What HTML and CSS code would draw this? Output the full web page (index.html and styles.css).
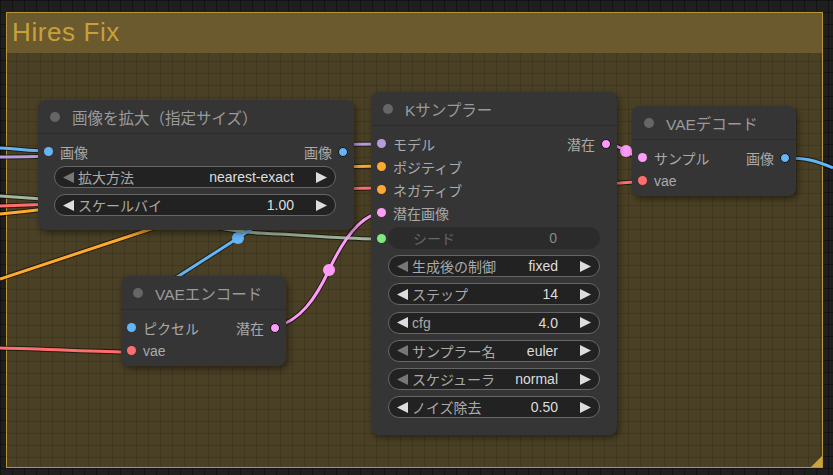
FILE: index.html
```html
<!DOCTYPE html>
<html lang="ja">
<head>
<meta charset="utf-8">
<title>Hires Fix</title>
<link rel="stylesheet" href="styles.css">
</head>
<body>
<div class="canvas">
  <div class="group">
    <div class="group-title">Hires Fix</div>
    <div class="group-body"></div>
    <div class="group-corner"></div>
  </div>

  <svg class="wires" width="833" height="475" viewBox="0 0 833 475">
    <g class="wire-shadow">
      <path d="M0,148 C20,149 30,151 47,151"/>
      <path d="M0,157 C120,157 280,144 381,144"/>
      <path d="M0,214 C150,200 250,166 381,166"/>
      <path d="M0,279 L160,226 C200,214 260,200 330,195"/>
      <path d="M0,196 C150,205 200,230 260,233 S350,239 381,239"/>
      <path d="M0,206 C200,200 300,188 380,188 L620,183 C630,182 635,182 642,182"/>
      <path d="M0,348 C50,349 100,352 131,352"/>
      <path d="M160,288 L238,238 L262,222"/>
      <path d="M276,327 C300,320 315,300 329,270 S360,215 381,213"/>
      <path d="M606,144 C615,144 620,148 625,150 S635,158 642,158"/>
      <path d="M786,158 C805,158 815,160 833,168"/>
    </g>
    <g class="wire">
      <path stroke="#64b5f6" d="M0,148 C20,149 30,151 47,151"/>
      <path stroke="#b39ddb" d="M0,157 C120,157 280,144 381,144"/>
      <path stroke="#ffa931" d="M0,214 C150,200 250,166 381,166"/>
      <path stroke="#ffa931" d="M0,279 L160,226 C200,214 260,200 330,195"/>
      <path stroke="#a1b5a1" d="M0,196 C150,205 200,230 260,233 S350,239 381,239"/>
      <path stroke="#ff6e6e" d="M0,206 C200,200 300,188 380,188 L620,183 C630,182 635,182 642,182"/>
      <path stroke="#ff6e6e" d="M0,348 C50,349 100,352 131,352"/>
      <path stroke="#64b5f6" d="M160,288 L238,238 L262,222"/>
      <path stroke="#ff9cf9" d="M276,327 C300,320 315,300 329,270 S360,215 381,213"/>
      <path stroke="#ff9cf9" d="M606,144 C615,144 620,148 625,150 S635,158 642,158"/>
      <path stroke="#64b5f6" d="M786,158 C805,158 815,160 833,168"/>
    </g>
    <circle cx="238" cy="238" r="6" fill="#64b5f6"/>
    <circle cx="329" cy="270" r="6" fill="#ff9cf9"/>
    <circle cx="626" cy="151" r="6" fill="#ff9cf9"/>
  </svg>

  <!-- Image scale node -->
  <div class="node node-scale">
    <div class="node-title"><span class="title-dot"></span>画像を拡大（指定サイズ）</div>
    <div class="node-body">
      <div class="slot-row">
        <div class="slot-in"><span class="dot c-image"></span>画像</div>
        <div class="slot-out">画像<span class="dot out c-image"></span></div>
      </div>
      <div class="widgets">
        <div class="widget">
          <svg class="arrow dim" viewBox="0 0 11 11"><polygon points="11,0 11,11 0,5.5"/></svg>
          <span class="w-label">拡大方法</span>
          <span class="w-value">nearest-exact</span>
          <svg class="arrow" viewBox="0 0 11 11"><polygon points="0,0 0,11 11,5.5"/></svg>
        </div>
        <div class="widget">
          <svg class="arrow" viewBox="0 0 11 11"><polygon points="11,0 11,11 0,5.5"/></svg>
          <span class="w-label">スケールバイ</span>
          <span class="w-value">1.00</span>
          <svg class="arrow" viewBox="0 0 11 11"><polygon points="0,0 0,11 11,5.5"/></svg>
        </div>
      </div>
    </div>
  </div>

  <!-- KSampler -->
  <div class="node node-ksampler">
    <div class="node-title"><span class="title-dot"></span>Kサンプラー</div>
    <div class="node-body">
      <div class="slot-row">
        <div class="slot-in"><span class="dot c-model"></span>モデル</div>
        <div class="slot-out">潜在<span class="dot out c-latent"></span></div>
      </div>
      <div class="slot-row">
        <div class="slot-in"><span class="dot c-cond"></span>ポジティブ</div>
      </div>
      <div class="slot-row">
        <div class="slot-in"><span class="dot c-cond"></span>ネガティブ</div>
      </div>
      <div class="slot-row">
        <div class="slot-in"><span class="dot c-latent"></span>潜在画像</div>
      </div>
      <div class="seed-row">
        <span class="dot c-int"></span>
        <div class="widget widget-off">
          <span class="w-label">シード</span>
          <span class="w-value">0</span>
        </div>
      </div>
      <div class="widgets widgets-k">
        <div class="widget">
          <svg class="arrow dim" viewBox="0 0 11 11"><polygon points="11,0 11,11 0,5.5"/></svg>
          <span class="w-label">生成後の制御</span>
          <span class="w-value">fixed</span>
          <svg class="arrow" viewBox="0 0 11 11"><polygon points="0,0 0,11 11,5.5"/></svg>
        </div>
        <div class="widget">
          <svg class="arrow" viewBox="0 0 11 11"><polygon points="11,0 11,11 0,5.5"/></svg>
          <span class="w-label">ステップ</span>
          <span class="w-value">14</span>
          <svg class="arrow" viewBox="0 0 11 11"><polygon points="0,0 0,11 11,5.5"/></svg>
        </div>
        <div class="widget">
          <svg class="arrow" viewBox="0 0 11 11"><polygon points="11,0 11,11 0,5.5"/></svg>
          <span class="w-label">cfg</span>
          <span class="w-value">4.0</span>
          <svg class="arrow" viewBox="0 0 11 11"><polygon points="0,0 0,11 11,5.5"/></svg>
        </div>
        <div class="widget">
          <svg class="arrow dim" viewBox="0 0 11 11"><polygon points="11,0 11,11 0,5.5"/></svg>
          <span class="w-label">サンプラー名</span>
          <span class="w-value">euler</span>
          <svg class="arrow" viewBox="0 0 11 11"><polygon points="0,0 0,11 11,5.5"/></svg>
        </div>
        <div class="widget">
          <svg class="arrow dim" viewBox="0 0 11 11"><polygon points="11,0 11,11 0,5.5"/></svg>
          <span class="w-label">スケジューラ</span>
          <span class="w-value">normal</span>
          <svg class="arrow" viewBox="0 0 11 11"><polygon points="0,0 0,11 11,5.5"/></svg>
        </div>
        <div class="widget">
          <svg class="arrow" viewBox="0 0 11 11"><polygon points="11,0 11,11 0,5.5"/></svg>
          <span class="w-label">ノイズ除去</span>
          <span class="w-value">0.50</span>
          <svg class="arrow" viewBox="0 0 11 11"><polygon points="0,0 0,11 11,5.5"/></svg>
        </div>
      </div>
    </div>
  </div>

  <!-- VAE decode -->
  <div class="node node-decode">
    <div class="node-title"><span class="title-dot"></span>VAEデコード</div>
    <div class="node-body">
      <div class="slot-row">
        <div class="slot-in"><span class="dot c-latent"></span>サンプル</div>
        <div class="slot-out">画像<span class="dot out c-image"></span></div>
      </div>
      <div class="slot-row">
        <div class="slot-in"><span class="dot c-vae"></span>vae</div>
      </div>
    </div>
  </div>

  <!-- VAE encode -->
  <div class="node node-encode">
    <div class="node-title"><span class="title-dot"></span>VAEエンコード</div>
    <div class="node-body">
      <div class="slot-row">
        <div class="slot-in"><span class="dot c-image"></span>ピクセル</div>
        <div class="slot-out">潜在<span class="dot out c-latent"></span></div>
      </div>
      <div class="slot-row">
        <div class="slot-in"><span class="dot c-vae"></span>vae</div>
      </div>
    </div>
  </div>
</div>
</body>
</html>
```

FILE: styles.css
```css
html, body {
  margin: 0;
  padding: 0;
  background: #1e1e1e;
}

.canvas {
  position: relative;
  width: 833px;
  height: 475px;
  overflow: hidden;
  font-family: "Liberation Sans", "Noto Sans CJK JP", sans-serif;
  background-color: #1f1f1f;
  background-image:
    linear-gradient(rgba(0, 0, 0, 0.35) 1px, transparent 1px),
    linear-gradient(90deg, rgba(0, 0, 0, 0.35) 1px, transparent 1px);
  background-size: 12px 12px;
}

/* ---------- group ---------- */
.group {
  position: absolute;
  left: 6px;
  top: 12px;
  width: 815px;
  height: 454px;
  border: 1.5px solid #b8943a;
  display: flex;
  flex-direction: column;
}

.group-title {
  height: 40px;
  flex: none;
  background: #6b5a2d;
  color: #c6a13b;
  font-size: 26px;
  letter-spacing: 0.6px;
  line-height: 38px;
  padding-left: 5px;
  box-sizing: border-box;
}

.group-body {
  flex: 1;
  background-color: #4a4025;
  background-image:
    linear-gradient(rgba(0, 0, 0, 0.13) 1px, transparent 1px),
    linear-gradient(90deg, rgba(0, 0, 0, 0.13) 1px, transparent 1px);
  background-size: 12px 12px;
  background-position: -3px -4px;
}

.group-corner {
  position: absolute;
  right: 0;
  bottom: 0;
  width: 0;
  height: 0;
  border-left: 11px solid transparent;
  border-bottom: 11px solid #c9a33e;
}

/* ---------- wires ---------- */
.wires {
  position: absolute;
  left: 0;
  top: 0;
}

.wire-shadow path {
  fill: none;
  stroke: rgba(0, 0, 0, 0.55);
  stroke-width: 5;
}

.wire path {
  fill: none;
  stroke-width: 3;
}

/* ---------- nodes ---------- */
.node {
  position: absolute;
  background: #353535;
  border-radius: 8px;
  box-shadow: 2px 3px 6px rgba(0, 0, 0, 0.45);
  display: flex;
  flex-direction: column;
}

.node-scale { left: 38px; top: 100px; width: 316px; }
.node-ksampler { left: 371px; top: 92px; width: 246px; }
.node-decode { left: 632px; top: 106px; width: 164px; }
.node-encode { left: 121px; top: 276px; width: 165px; }

.node-title {
  height: 34px;
  flex: none;
  display: flex;
  align-items: center;
  gap: 12px;
  padding-left: 12px;
  color: #9a9a9a;
  font-size: 15.5px;
  border-bottom: 1px solid #2c2c2c;
  box-sizing: border-box;
}

.title-dot {
  width: 10px;
  height: 10px;
  border-radius: 50%;
  background: #666;
  flex: none;
}

.node-body {
  padding: 6px 0 14px;
  display: flex;
  flex-direction: column;
}

.node-decode .node-body,
.node-encode .node-body {
  padding-bottom: 4px;
}

.node-ksampler .node-body {
  padding-bottom: 17px;
}

.slot-row {
  height: 23px;
  display: flex;
  align-items: center;
  justify-content: space-between;
  font-size: 14px;
  color: #aaa;
}

.slot-in {
  display: flex;
  align-items: center;
  gap: 7px;
  padding-left: 6px;
}

.slot-out {
  display: flex;
  align-items: center;
  gap: 6px;
  padding-right: 6px;
}

.dot {
  width: 9px;
  height: 9px;
  border-radius: 50%;
  flex: none;
}

.dot.out {
  width: 8px;
  height: 8px;
  border: 1.5px solid #111;
}

.c-image { background: #64b5f6; }
.c-model { background: #b39ddb; }
.c-cond { background: #ffa931; }
.c-latent { background: #ff9cf9; }
.c-vae { background: #ff6e6e; }
.c-int { background: #7eea7e; }

/* ---------- widgets ---------- */
.widgets {
  display: flex;
  flex-direction: column;
  gap: 6px;
  padding: 3px 18px 0 16px;
}

.widgets-k {
  gap: 6.3px;
  padding: 6px 17px 0 17px;
}

.widget {
  height: 22px;
  box-sizing: border-box;
  background: #222;
  border: 1px solid #666;
  border-radius: 11px;
  display: flex;
  align-items: center;
  padding: 0 8px;
  font-size: 14px;
}

.arrow {
  width: 11px;
  height: 11px;
  flex: none;
  fill: #ddd;
}

.arrow.dim {
  fill: #777;
}

.w-label {
  color: #aaa;
  margin-left: 4px;
  flex: 1;
  white-space: nowrap;
}

.w-value {
  color: #ddd;
  margin-right: 22px;
  white-space: nowrap;
}

.seed-row {
  height: 22px;
  margin-top: 3px;
  display: flex;
  align-items: center;
  padding-left: 6px;
}

.widget-off {
  flex: 1;
  margin-left: 2px;
  margin-right: 17px;
  background: #2b2b2b;
  border-color: #2b2b2b;
  padding: 0 8px 0 24px;
}

.widget-off .w-label {
  color: #666;
  margin-left: 0;
}

.widget-off .w-value {
  color: #888;
  margin-right: 34px;
}
```
